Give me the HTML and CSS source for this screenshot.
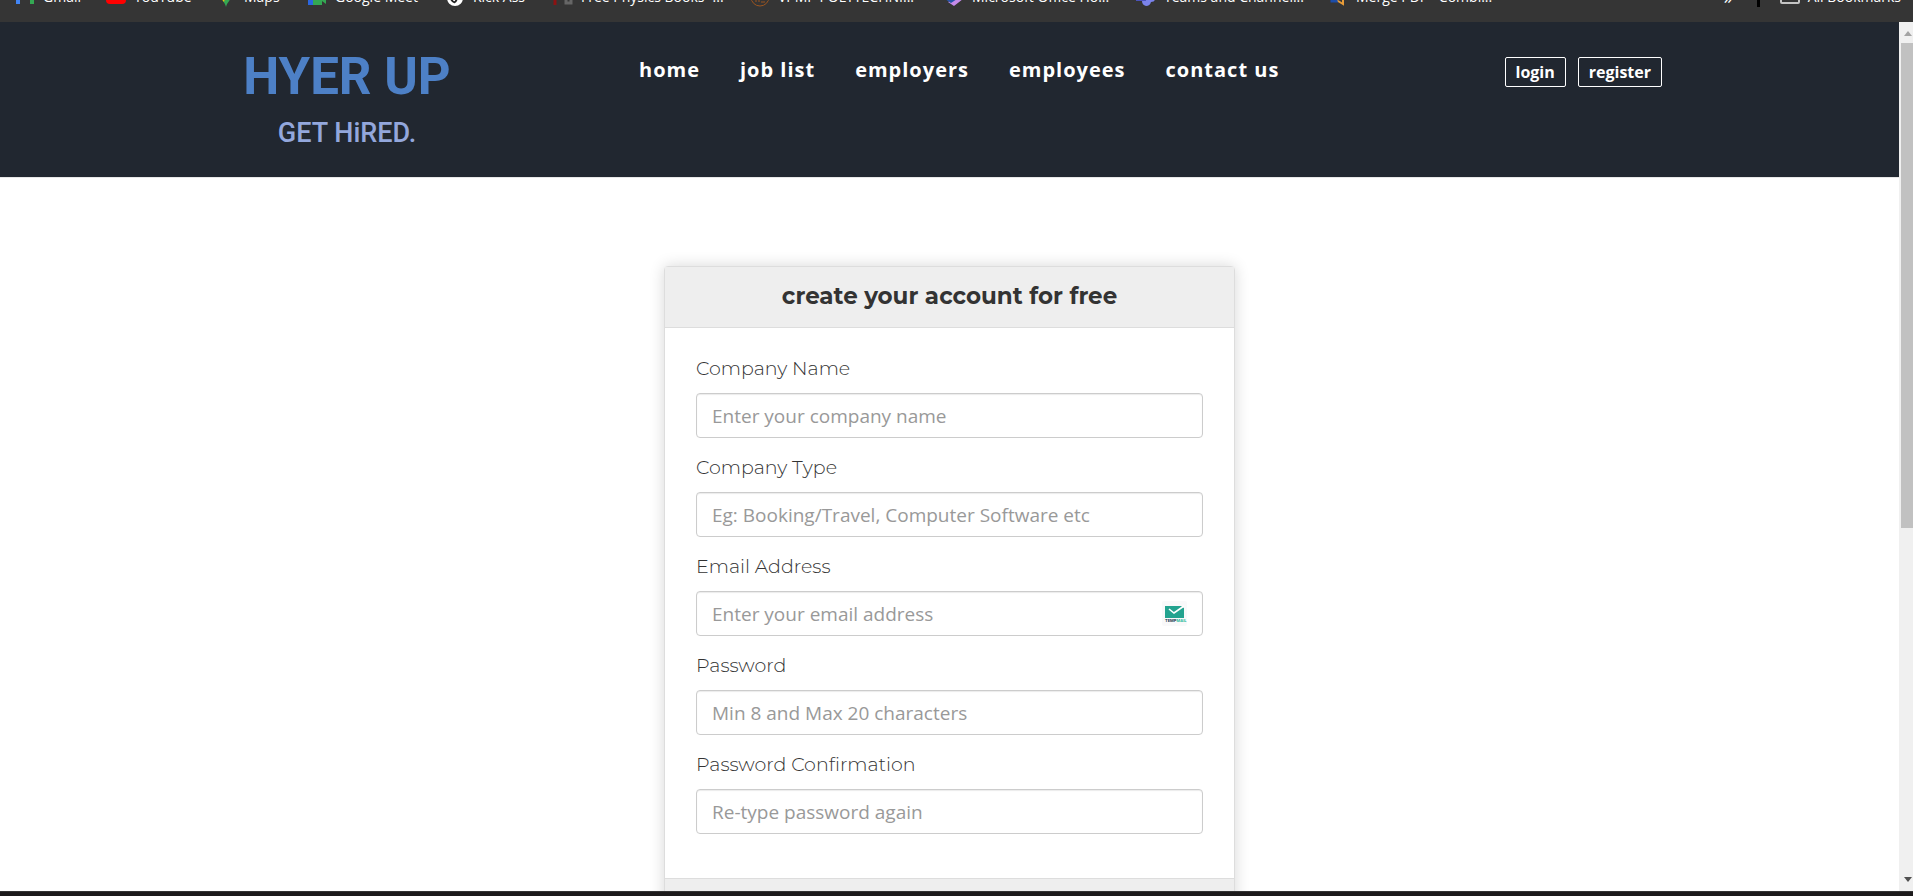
FILE: index.html
```html
<!DOCTYPE html>
<html lang="en">
<head>
<meta charset="utf-8">
<title>Hyer Up - Create account</title>
<link rel="stylesheet" href="styles.css">
</head>
<body>
<nav class="bookmarks" aria-label="Bookmarks">
  <ul class="bookmark-list">
    <li><a href="#"><svg viewBox="0 0 20 20"><path fill="#4285f4" d="M1 2h4v15H1z"/><path fill="#34a853" d="M15 2h4v15h-4z"/><path fill="#ea4335" d="M1 2l9 5 9-5v4l-9 5-9-5z"/></svg>Gmail</a></li>
    <li><a href="#"><svg viewBox="0 0 20 20"><rect y="3" width="20" height="14" rx="4" fill="#f00"/><path fill="#fff" d="M8 7l5 3-5 3z"/></svg>YouTube</a></li>
    <li><a href="#"><svg viewBox="0 0 20 20"><path fill="#34a853" d="M10 20C9 15 4 12 4 7a6 6 0 0 1 12 0c0 5-5 8-6 13z"/><path fill="#fbbc04" d="M5 11l5-4-2 8z"/></svg>Maps</a></li>
    <li><a href="#"><svg viewBox="0 0 20 20"><path fill="#34a853" d="M1 3h14v4l4-3v13l-4-3v4H1z"/><path fill="#2b66e0" d="M1 8h5v10H1z"/></svg>Google Meet</a></li>
    <li><a href="#"><svg viewBox="0 0 20 20"><circle cx="10" cy="11" r="8" fill="#fff"/><path d="M6 12q4 7 6-1l2-3" fill="none" stroke="#222" stroke-width="2"/></svg>Kick Ass</a></li>
    <li><a href="#"><svg viewBox="0 0 20 20"><path fill="none" stroke="#8c1212" stroke-width="3" d="M2 18V3h5"/><path fill="none" stroke="#666" stroke-width="3" d="M13 3v13h5v-5h-5"/></svg>Free Physics Books -...</a></li>
    <li><a href="#"><svg viewBox="0 0 20 20"><circle cx="10" cy="10" r="9" fill="none" stroke="#9c5520" stroke-width="1"/><path d="M6 15V9m3 6V9m2 6h4" stroke="#9c5520"/></svg>VPMP POLYTECHNI...</a></li>
    <li><a href="#"><svg viewBox="0 0 20 20"><path fill="#2f7be0" d="M1 3h9v13l-9-4z"/><path fill="#c58bea" d="M19 3v9l-9 7-6-4 9-5V3z"/><path fill="#2754a8" d="M1 12l8-3 4 3-6 4z"/></svg>Microsoft Office Ho...</a></li>
    <li><a href="#"><svg viewBox="0 0 20 20"><path fill="#7b83eb" d="M6 6h13v6q0 3-4 3-1 4-5 4-4-1-4-5z"/><path fill="#4b53bc" d="M0 4h10v10H0z"/></svg>Teams and Channel...</a></li>
    <li><a href="#"><svg viewBox="0 0 20 20"><path fill="none" stroke="#1d4da8" stroke-width="3" d="M4 5v9h6"/><path fill="none" stroke="#e89c38" stroke-width="2" d="M9 13l6-4v8l-5-3"/></svg>Merge PDF - Combi...</a></li>
  </ul>
  <div class="bookmark-end">
    <a href="#">»</a>
    <span class="divider"></span>
    <a href="#"><svg viewBox="0 0 20 20"><rect x="1" y="3" width="18" height="13" rx="1" fill="none" stroke="#c4c4c4" stroke-width="2"/></svg>All Bookmarks</a>
  </div>
</nav>

<div class="viewport">
  <div class="page">
    <header class="site-header">
      <div class="container">
        <a class="logo" href="#">
          <span class="logo-name">HYER UP</span>
          <span class="logo-tagline">GET HiRED.</span>
        </a>
        <nav class="main-nav" aria-label="Main">
          <a href="#">home</a>
          <a href="#">job list</a>
          <a href="#">employers</a>
          <a href="#">employees</a>
          <a href="#">contact us</a>
        </nav>
        <div class="account">
          <button type="button">login</button>
          <button type="button">register</button>
        </div>
      </div>
    </header>
    <main>
      <form class="card">
        <h1 class="card-header">create your account for free</h1>
        <div class="card-body">
          <div class="field">
            <label for="company">Company Name</label>
            <input id="company" type="text" placeholder="Enter your company name">
          </div>
          <div class="field">
            <label for="type">Company Type</label>
            <input id="type" type="text" placeholder="Eg: Booking/Travel, Computer Software etc">
          </div>
          <div class="field">
            <label for="email">Email Address</label>
            <div class="input-wrap">
              <input id="email" type="email" placeholder="Enter your email address">
              <svg class="temp-mail" viewBox="0 0 25 25"><rect width="25" height="25" rx="2" fill="#f9f9fa"/><path fill="#23a38f" d="M3 5h16l3 2v10H3z"/><path fill="none" stroke="#fff" stroke-width="1.6" d="M7 8l5 4 10-7"/><text x="3" y="21" class="temp-mail-text"><tspan fill="#20364a">TEMP</tspan><tspan fill="#25b99a">MAIL</tspan></text></svg>
            </div>
          </div>
          <div class="field">
            <label for="password">Password</label>
            <input id="password" type="password" placeholder="Min 8 and Max 20 characters">
          </div>
          <div class="field">
            <label for="confirm">Password Confirmation</label>
            <input id="confirm" type="password" placeholder="Re-type password again">
          </div>
        </div>
        <div class="card-footer"></div>
      </form>
    </main>
  </div>
  <div class="scrollbar" aria-hidden="true">
    <svg viewBox="0 0 14 21"><path fill="#a3a3a3" d="M5 14l4-5 4 5z"/></svg>
    <div class="track"><div class="thumb"></div></div>
    <svg viewBox="0 0 14 21"><path fill="#505050" d="M5 7h8l-4 5z"/></svg>
  </div>
</div>
<div class="taskbar"></div>
</body>
</html>
```

FILE: styles.css
```css
* { box-sizing: border-box; }

body {
  margin: 0;
  height: 100vh;
  display: flex;
  flex-direction: column;
  overflow: hidden;
  background: #fff;
  color: #333;
  font-family: "Open Sans", sans-serif;
}

a { color: inherit; text-decoration: none; }

/* Bookmark strip */
.bookmarks {
  flex: none;
  height: 22px;
  padding: 0 12px 15px 15px;
  display: flex;
  justify-content: space-between;
  align-items: flex-end;
  overflow: hidden;
  background: #353535;
  color: #fff;
  font-size: 14px;
  line-height: 20px;
  white-space: nowrap;
}
.bookmark-list {
  margin: 0;
  padding: 0;
  list-style: none;
  display: grid;
  grid-template-columns: 91px 110px 91px 138px 108px 197px 194px 192px 192px 170px;
}
.bookmarks a { display: flex; align-items: center; gap: 8px; }
.bookmarks svg { flex: none; width: 20px; height: 20px; }
.bookmark-end { display: flex; align-items: flex-end; gap: 20px; }
.bookmark-end > a:first-child { padding-right: 4px; font-size: 18px; }
.divider { width: 3px; height: 20px; background: #000; }

/* Page and scrollbar */
.viewport { flex: 1; min-height: 0; display: flex; }
.page { flex: 1; overflow: hidden; }
.scrollbar {
  flex: none;
  width: 14px;
  display: flex;
  flex-direction: column;
  background: #f0f0f0;
}
.scrollbar svg { flex: none; display: block; width: 14px; height: 21px; }
.track { flex: 1; padding-left: 2px; }
.thumb { height: 58.7%; background: #c1c1c1; }
.taskbar { flex: none; height: 5px; background: #1c1a1b; border-top: 1px solid #333; }

/* Site header */
.site-header { background: #212730; border-bottom: 1px solid #e7e7e7; }
.container {
  max-width: 1463px;
  min-height: 155px;
  margin: 0 auto;
  padding: 0 19px;
  display: grid;
  grid-template-columns: 402px 1fr auto;
  align-items: start;
}
.logo {
  width: 220px;
  padding-top: 27px;
  display: flex;
  flex-direction: column;
  align-items: center;
  font-family: Roboto, sans-serif;
  white-space: nowrap;
}
.logo-name { color: #4d80c6; font-size: 51px; line-height: 56px; font-weight: 700; }
.logo-tagline { color: #93a7dc; font-size: 27px; line-height: 56px; font-weight: 500; }
.main-nav {
  padding-top: 34px;
  display: flex;
  gap: 40px;
  color: #fff;
  font-size: 20px;
  line-height: 28px;
  font-weight: 700;
  letter-spacing: 1px;
}
.account { padding-top: 35px; display: flex; gap: 12px; }
.account button {
  height: 30px;
  padding: 0 10px;
  border: 1px solid #fff;
  border-radius: 2px;
  background: transparent;
  color: #fff;
  font: 700 16px/28px "Open Sans", sans-serif;
}

/* Registration card */
main { padding: 88px 20px 0; }
.card {
  max-width: 571px;
  margin: 0 auto;
  border: 1px solid #ddd;
  border-radius: 4px;
  background: #fff;
  box-shadow: 0 0 15px rgba(0, 0, 0, 0.16);
}
.card-header {
  margin: 0;
  padding: 14px 15px 16px;
  border-bottom: 1px solid #ddd;
  background: #eee;
  font: 700 23px/30px Montserrat, Inter, sans-serif;
  text-align: center;
}
.card-body { padding: 28px 31px 44px; display: grid; gap: 17px; }
.field { display: grid; gap: 12px; }
.field label { font: 300 19px/25px Montserrat, Inter, sans-serif; }
.field input {
  width: 100%;
  height: 45px;
  padding: 0 15px;
  border: 1px solid #ccc;
  border-radius: 4px;
  background: #fff;
  box-shadow: inset 0 1px 1px rgba(0, 0, 0, 0.08);
  color: #555;
  font: 400 19px/25px "Open Sans", sans-serif;
}
.field input::placeholder { color: #999; opacity: 1; }
.input-wrap { position: relative; }
.temp-mail { position: absolute; top: 10px; right: 16px; width: 25px; height: 25px; }
.temp-mail-text { font: 700 4px Inter, sans-serif; }
.card-footer { height: 100px; border-top: 1px solid #ddd; background: #eee; }
```
